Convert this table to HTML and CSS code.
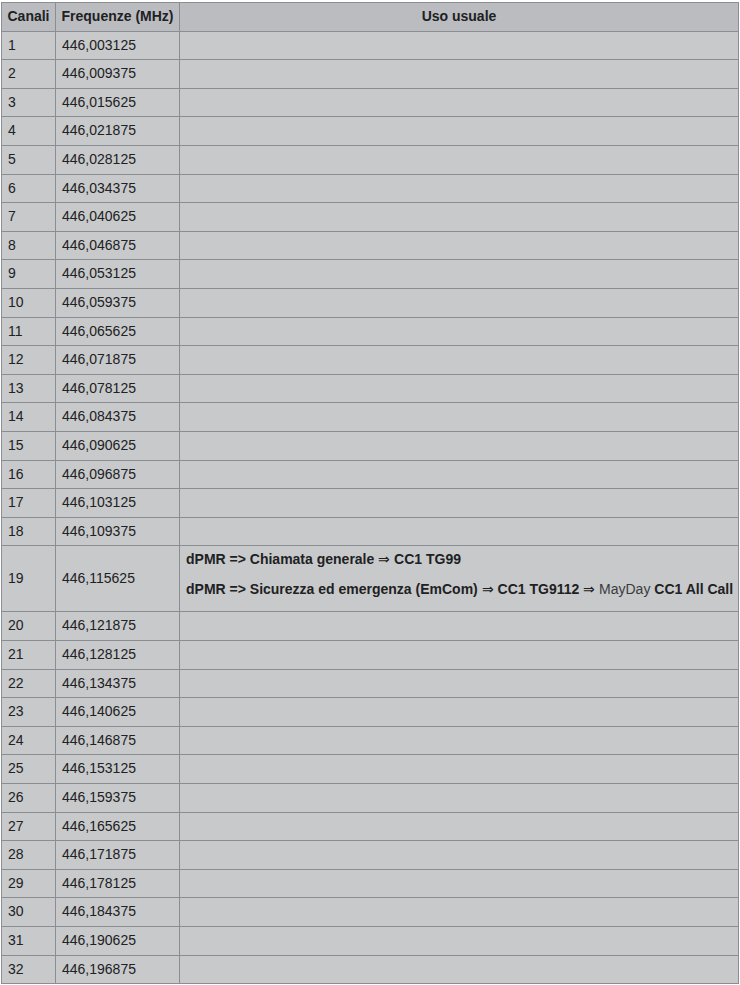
FILE: index.html
```html
<!DOCTYPE html>
<html lang="it">
<head>
<meta charset="utf-8">
<title>Canali PMR</title>
<link rel="stylesheet" href="styles.css">
</head>
<body>
<table class="wikitable">
<colgroup><col class="c1"><col class="c2"><col class="c3"></colgroup>
<thead>
<tr><th>Canali</th><th>Frequenze (MHz)</th><th>Uso usuale</th></tr>
</thead>
<tbody>
<tr><td>1</td><td>446,003125</td><td></td></tr>
<tr><td>2</td><td>446,009375</td><td></td></tr>
<tr><td>3</td><td>446,015625</td><td></td></tr>
<tr><td>4</td><td>446,021875</td><td></td></tr>
<tr><td>5</td><td>446,028125</td><td></td></tr>
<tr><td>6</td><td>446,034375</td><td></td></tr>
<tr><td>7</td><td>446,040625</td><td></td></tr>
<tr><td>8</td><td>446,046875</td><td></td></tr>
<tr><td>9</td><td>446,053125</td><td></td></tr>
<tr><td>10</td><td>446,059375</td><td></td></tr>
<tr><td>11</td><td>446,065625</td><td></td></tr>
<tr><td>12</td><td>446,071875</td><td></td></tr>
<tr><td>13</td><td>446,078125</td><td></td></tr>
<tr><td>14</td><td>446,084375</td><td></td></tr>
<tr><td>15</td><td>446,090625</td><td></td></tr>
<tr><td>16</td><td>446,096875</td><td></td></tr>
<tr><td>17</td><td>446,103125</td><td></td></tr>
<tr><td>18</td><td>446,109375</td><td></td></tr>
<tr><td>19</td><td>446,115625</td><td class="uso">
<p><b>dPMR =&gt; Chiamata generale</b> ⇒ <b>CC1 TG99</b></p>
<p><b>dPMR =&gt; Sicurezza ed emergenza (EmCom)</b> ⇒ <b>CC1 TG9112</b> ⇒ <span class="soft">MayDay</span> <b>CC1 All Call</b></p>
</td></tr>
<tr><td>20</td><td>446,121875</td><td></td></tr>
<tr><td>21</td><td>446,128125</td><td></td></tr>
<tr><td>22</td><td>446,134375</td><td></td></tr>
<tr><td>23</td><td>446,140625</td><td></td></tr>
<tr><td>24</td><td>446,146875</td><td></td></tr>
<tr><td>25</td><td>446,153125</td><td></td></tr>
<tr><td>26</td><td>446,159375</td><td></td></tr>
<tr><td>27</td><td>446,165625</td><td></td></tr>
<tr><td>28</td><td>446,171875</td><td></td></tr>
<tr><td>29</td><td>446,178125</td><td></td></tr>
<tr><td>30</td><td>446,184375</td><td></td></tr>
<tr><td>31</td><td>446,190625</td><td></td></tr>
<tr><td>32</td><td>446,196875</td><td></td></tr>
</tbody>
</table>
</body>
</html>
```
FILE: styles.css
```css
html, body {
  margin: 0;
  padding: 0;
  background: #ffffff;
}
body {
  padding: 2px 1px;
  font-family: "Liberation Sans", Arial, sans-serif;
  font-size: 14px;
  color: #202122;
}
.wikitable {
  border-collapse: collapse;
  table-layout: fixed;
  width: 738px;
  background: #c8c9cb;
  border: 1px solid #8a8e93;
}
.c1 { width: 54px; }
.c2 { width: 124px; }
.wikitable th,
.wikitable td {
  border: 1px solid #8a8e93;
  padding: 3px 5px 3px 6px;
  line-height: 21.6px;
  text-align: left;
  vertical-align: middle;
  white-space: nowrap;
  overflow: visible;
}
.wikitable th {
  background: #bbbcc0;
  font-weight: bold;
  text-align: center;
  padding-left: 4px;
  padding-right: 4px;
}
.uso p {
  margin: 0 0 8px 0;
  white-space: nowrap;
}
.uso b {
  font-weight: bold;
}
.soft {
  color: #3a3b3d;
}
```
